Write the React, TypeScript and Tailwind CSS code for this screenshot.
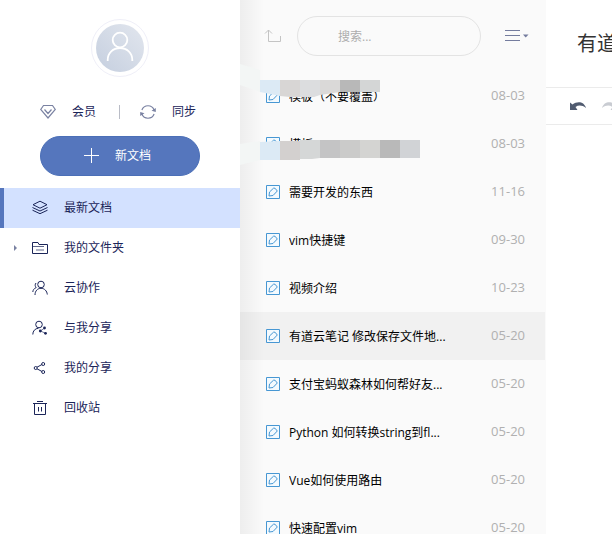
import type { ReactNode } from "react";

const notes = [
  { title: "模板（不要覆盖）", date: "08-03" },
  { title: "模板", date: "08-03" },
  { title: "需要开发的东西", date: "11-16" },
  { title: "vim快捷键", date: "09-30" },
  { title: "视频介绍", date: "10-23" },
  { title: "有道云笔记 修改保存文件地...", date: "05-20", active: true },
  { title: "支付宝蚂蚁森林如何帮好友...", date: "05-20" },
  { title: "Python 如何转换string到fl...", date: "05-20" },
  { title: "Vue如何使用路由", date: "05-20" },
  { title: "快速配置vim", date: "05-20" },
];

function Icon({ children }: { children: ReactNode }) {
  return (
    <svg className="size-4 shrink-0" viewBox="0 0 16 16" fill="none" stroke="currentColor" aria-hidden="true">
      {children}
    </svg>
  );
}

const navItems = [
  {
    label: "最新文档",
    active: true,
    icon: (
      <Icon>
        <path d="M8 1.200 15 4.700 8 8.200 1 4.700Z M.5 7.500 8 11 15.500 7.500 M.5 10.200 8 13.700 15.500 10.200" />
      </Icon>
    ),
  },
  {
    label: "我的文件夹",
    expandable: true,
    icon: (
      <Icon>
        <path d="M.5 13.500V2.500H6L7 4.500H15.500V13.500Z" />
        <path d="M1 6.500H12 M4 10H12" strokeOpacity=".7" />
      </Icon>
    ),
  },
  {
    label: "云协作",
    icon: (
      <Icon>
        <circle cx="9" cy="4.500" r="3.300" />
        <path d="M3 15C3 11 5.500 8.300 9 8.300S15 11 15.300 14.500 M4 3C2.800 4.500 3 6.500 4.200 7.500C2 8.500 1 10 .8 12" />
      </Icon>
    ),
  },
  {
    label: "与我分享",
    icon: (
      <Icon>
        <circle cx="7" cy="4.500" r="3.300" />
        <path d="M.8 14.500C.8 11 3 8.500 6.500 8.200" />
        <path d="M8.500 11 12.500 8 M8.500 11 13.500 13.300" strokeWidth=".6" />
        <circle cx="8.300" cy="11" r="1.400" fill="currentColor" stroke="none" />
        <circle cx="12.500" cy="8" r="1.400" fill="currentColor" stroke="none" />
        <circle cx="13.500" cy="13.300" r="1.400" fill="currentColor" stroke="none" />
      </Icon>
    ),
  },
  {
    label: "我的分享",
    icon: (
      <Icon>
        <path d="M5 7.200 10 4.500 M5 8.800 10 11.500" />
        <circle cx="3.700" cy="8" r="1.500" />
        <circle cx="11.200" cy="4" r="1.500" />
        <circle cx="11.200" cy="12" r="1.500" />
      </Icon>
    ),
  },
  {
    label: "回收站",
    icon: (
      <Icon>
        <path d="M1 3.500H15 M5 1.500H11 M2.500 4V14.500H13.500V4 M6.500 7V11.500 M9.500 7V11.500" />
      </Icon>
    ),
  },
];

function Sidebar() {
  return (
    <aside className="flex w-60 shrink-0 flex-col bg-white text-[#1b2559]">
      <div className="mt-[19px] flex size-[58px] items-center justify-center self-center rounded-full border border-[#efeff8]">
        <div className="size-12 overflow-hidden rounded-full bg-linear-to-bl from-[#e2e6ee] to-[#c5cfdf]">
          <svg viewBox="0 0 48 48" fill="none" stroke="white" strokeWidth="1.800" role="img" aria-label="头像">
            <circle cx="24" cy="16" r="7.300" />
            <path d="M11.700 37V36C11.700 29 17 24 24 24S36.300 29 36.300 36V37" />
          </svg>
        </div>
      </div>
      <div className="mt-[25px] flex h-5 items-center px-10">
        <button className="flex items-center gap-4">
          <span className="text-[#7a82a2]">
            <Icon>
              <path
                d="M3.500 1.500H12.500L15.300 5.500 8 14 .7 5.500Z M4.500 5.500 8 9.500 11.500 5.500"
                strokeWidth="1.200"
              />
            </Icon>
          </span>
          会员
        </button>
        <span className="ml-[23px] h-3.5 w-px bg-[#b9bcc6]" />
        <button className="ml-5 flex items-center gap-4">
          <span className="text-[#7a82a2]">
            <Icon>
              <path d="M1.900 6A6.500 6.500 0 0 1 14.100 6 M14.100 10A6.500 6.500 0 0 1 1.900 10" strokeWidth="1.200" />
              <path d="M15.800 4V8L11.500 6.800Z M.2 12V8L4.500 9.200Z" fill="currentColor" stroke="none" />
            </Icon>
          </span>
          同步
        </button>
      </div>
      <button className="mx-10 mt-3.5 flex h-10 items-center justify-center gap-4 rounded-full border border-[#4b6fb7] bg-[#5576bd] pr-1.5 text-white">
        <Icon>
          <path d="M8.500 0V15 M1 7.500H16" />
        </Icon>
        新文档
      </button>
      <nav className="mt-3">
        {navItems.map((item) => (
          <a
            key={item.label}
            href="#"
            className={`flex h-10 items-center border-l-4 ${item.active ? "border-[#5576bd] bg-[#d3e1ff]" : "border-transparent"}`}
          >
            <span className="flex w-7 pl-2.5">
              {item.expandable && (
                <svg className="h-[6px] w-[3px]" viewBox="0 0 3 6" fill="#7a82a2" aria-hidden="true">
                  <path d="M0 0 3 3 0 6Z" />
                </svg>
              )}
            </span>
            {item.icon}
            <span className="ml-4">{item.label}</span>
          </a>
        ))}
      </nav>
    </aside>
  );
}

function NoteList() {
  return (
    <section className="relative flex w-[306px] shrink-0 flex-col bg-[#fafafa] pr-px">
      <header className="flex h-[72px] shrink-0 items-center pl-6">
        <button aria-label="返回上级" className="text-[#c4c4c4]">
          <svg className="h-4 w-[18px]" viewBox="0 0 18 16" fill="none" stroke="currentColor" aria-hidden="true">
            <path d="M4.500 2V13.500H16.500V8 M1 5.500 4.500 2 8 5.500" />
          </svg>
        </button>
        <input
          type="search"
          aria-label="搜索"
          placeholder="搜索..."
          className="ml-[15px] h-10 w-[184px] rounded-full border border-[#e3e3e3] bg-transparent px-10 outline-none placeholder:text-[#adadad]"
        />
        <button aria-label="排序" className="ml-6 text-[#747c9e]">
          <svg className="h-3 w-6" viewBox="0 0 24 12" fill="none" stroke="currentColor" aria-hidden="true">
            <path d="M0 .5H15 M0 5.500H15 M0 10.500H15" />
            <path d="M18 4.500H23.500L20.700 7.500Z" fill="currentColor" stroke="none" />
          </svg>
        </button>
      </header>
      <ul>
        {notes.map((note, i) => (
          <li key={i}>
            <a href="#" className={`flex h-12 items-center pr-5 pl-[25px] ${note.active ? "bg-[#f1f1f1]" : ""}`}>
              <svg className="size-4 shrink-0 text-[#4797d3]" viewBox="0 0 16 16" fill="none" stroke="currentColor" aria-hidden="true">
                <path d="M1.500 1.500H14.500V14.500H1.500Z" fill="#f4fafe" />
                <path d="M4 12 4.500 8 8.500 4.200H10L12.300 7 8 11.500Z" />
              </svg>
              <span className="ml-2 flex-1 truncate pt-0.5 text-black">{note.title}</span>
              <time className="text-[13px] text-[#b0b0b0]">{note.date}</time>
            </a>
          </li>
        ))}
      </ul>
      <div className="pointer-events-none absolute inset-y-0 left-0 w-6 bg-linear-to-r from-black/5 to-transparent" />
      <svg className="pointer-events-none absolute top-[60px] left-0 h-[110px] w-[180px]" viewBox="0 0 180 110" aria-hidden="true">
        <path d="M0 4 20 10V32L0 25Z M0 84 20 81V100L0 105Z" fill="#f3f6f5" />
        <path d="M20 20H40V36L20 32Z M20 82 40 81V100H20Z" fill="#dceaf5" />
        <path d="M40 20H60V37H50L40 36Z" fill="#d8d6d5" />
        <path d="M60 20H80V35L74 37H60Z" fill="#dcdddf" />
        <path d="M80 20H100V32L80 35Z" fill="#dad9d8" />
        <path d="M100 20H120V32H100Z" fill="#b8b8b8" />
        <path d="M120 20H140V32H120Z" fill="#d4d6d6" />
        <path d="M40 81H60V100H40Z" fill="#d3d0cf" />
        <path d="M60 80H80V98L72 99H60Z" fill="#d5d7d7" />
        <path d="M80 80H100V98H80Z" fill="#c4c4c5" />
        <path d="M100 80H120V98H100Z" fill="#cbcbca" />
        <path d="M120 80H140V98H120Z" fill="#d4d4d2" />
        <path d="M140 80H160V98H140Z" fill="#b9b9b9" />
        <path d="M160 80H180V98H160Z" fill="#d1d3d6" />
      </svg>
    </section>
  );
}

function Editor() {
  return (
    <main className="min-w-0 flex-1 overflow-hidden bg-white">
      <h1 className="flex h-[87px] items-center pl-[31px] text-xl whitespace-nowrap text-[#333]">
        有道云笔记 修改保存文件地址
      </h1>
      <div className="flex h-[38px] items-center gap-5 border-y border-[#ebebeb] pl-6">
        <button aria-label="撤销" className="shrink-0 text-[#505b70]">
          <svg className="h-2 w-4" viewBox="0 0 16 8" fill="currentColor" aria-hidden="true">
            <path d="M0 .5 2.500 2.500C7-1 14-1 16 6C12 3 8.500 3 5.500 5L7.500 8H0Z" />
          </svg>
        </button>
        <button aria-label="重做" className="-ml-1 shrink-0 text-[#c9ccd2]">
          <svg className="h-2 w-4" viewBox="0 0 16 8" fill="currentColor" aria-hidden="true">
            <path d="M16 .5 13.500 2.500C9-1 2-1 0 6C4 3 7.500 3 10.500 5L8.500 8H16Z" />
          </svg>
        </button>
      </div>
    </main>
  );
}

export default function App() {
  return (
    <div className="flex h-screen overflow-hidden bg-white font-['Open_Sans','Noto_Sans_CJK_SC',sans-serif] text-xs">
      <Sidebar />
      <NoteList />
      <Editor />
    </div>
  );
}
